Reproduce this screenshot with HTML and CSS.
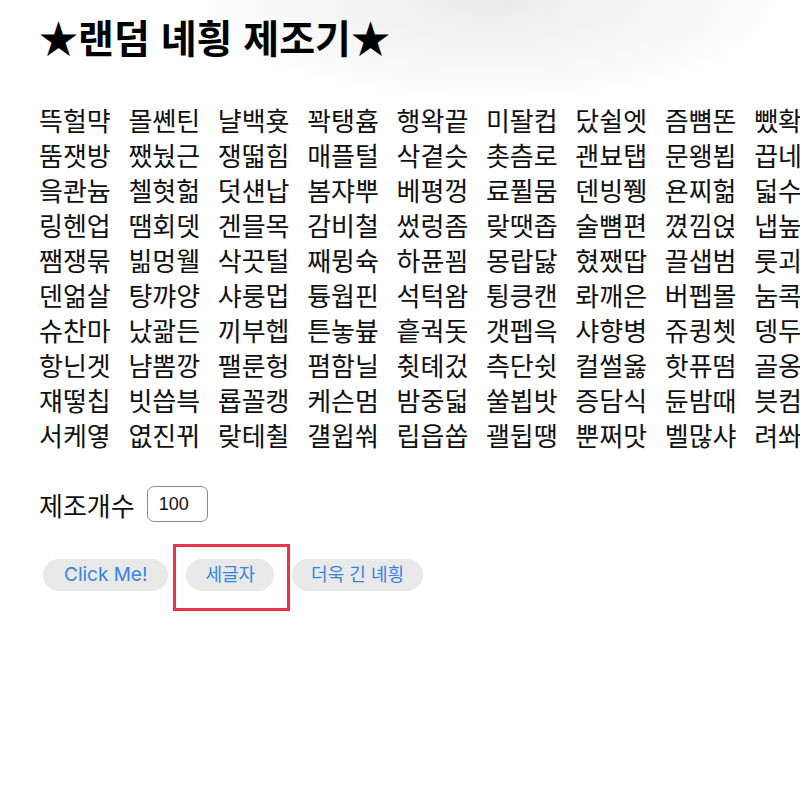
FILE: index.html
```html
<!DOCTYPE html>
<html lang="ko">
<head>
<meta charset="utf-8">
<title>랜덤 녜힁 제조기</title>
<link rel="stylesheet" href="styles.css">
</head>
<body>
<main class="page">
  <h1 class="title">★랜덤 녜힁 제조기★</h1>
  <div class="words-wrap">
    <div class="words">
      <span>뜩헐먁</span><span>몰쏀틴</span><span>냘백횻</span><span>꽉탱흄</span><span>행왁끝</span><span>미돨컵</span><span>닸쉴엣</span><span>즘뼘똔</span><span>뺐확녕</span>
      <span>뚬잿방</span><span>쨌눴근</span><span>쟁떫힘</span><span>매플털</span><span>삭곁슷</span><span>촛츰로</span><span>괜뵤탭</span><span>문왱뵙</span><span>끕네솜</span>
      <span>읔콴늄</span><span>첼혓헒</span><span>덧섄납</span><span>봄쟈뿌</span><span>베평껑</span><span>료퓔뭄</span><span>덴빙쮕</span><span>욘찌헒</span><span>덟수킹</span>
      <span>링헨업</span><span>땜회뎃</span><span>겐믈목</span><span>감비철</span><span>썼렁좀</span><span>랒땟좁</span><span>술뼘편</span><span>꼈낌얹</span><span>냅높펀</span>
      <span>쨈쟁묶</span><span>빎멍웰</span><span>삭끗털</span><span>째뮝슉</span><span>하퓬꾐</span><span>몽랍닳</span><span>혔쨌땁</span><span>끌샙범</span><span>룻괴잔</span>
      <span>덴얾살</span><span>턍꺄양</span><span>샤룽멉</span><span>튱웝핀</span><span>석턱왐</span><span>튕킁캔</span><span>롸깨은</span><span>버펩몰</span><span>눔콕샨</span>
      <span>슈찬마</span><span>났괆든</span><span>끼부헵</span><span>튼놓븊</span><span>흩궉돗</span><span>갯펩윽</span><span>샤향병</span><span>쥬큉쳇</span><span>뎅두밀</span>
      <span>항닌겟</span><span>냠뽐깡</span><span>팰룬헝</span><span>폄함닐</span><span>췻톄겄</span><span>측단쉿</span><span>컬썰옳</span><span>핫퓨떰</span><span>골옹텐</span>
      <span>쟤떻칩</span><span>빗씁븍</span><span>룝꼴캥</span><span>케슨멈</span><span>밤중덟</span><span>쑬뵙밧</span><span>증담식</span><span>듄밤때</span><span>븟컴놔</span>
      <span>서케옇</span><span>엾진뀌</span><span>랒테췰</span><span>걜윕쒀</span><span>립읍쏩</span><span>괠뒵땡</span><span>뿐쩌맛</span><span>벨많샤</span><span>려쏴튼</span>
    </div>
  </div>
  <div class="count-row">
    <label class="count-label" for="count">제조개수</label>
    <input class="count-input" id="count" type="text" value="100">
  </div>
  <div class="buttons">
    <button class="btn" lang="en">Click Me!</button>
    <button class="btn btn-marked">세글자</button>
    <button class="btn">더욱 긴 녜힁</button>
  </div>
</main>
</body>
</html>
```

FILE: styles.css
```css
html, body {
  margin: 0;
  padding: 0;
}

body {
  background-color: #ffffff;
  background-image: radial-gradient(ellipse 310px 105px at 490px 0px, #ebebeb 0%, rgba(255, 255, 255, 0) 100%);
  background-repeat: no-repeat;
  min-height: 800px;
  font-family: "Noto Sans CJK KR", "Noto Sans", sans-serif;
  color: #111111;
}

.page {
  padding: 12px 0 0 39px;
}

.title {
  margin: 0;
  font-size: 39px;
  line-height: 48px;
  font-weight: 700;
  color: #000000;
  font-family: "Noto Sans CJK KR", sans-serif;
}

.words-wrap {
  margin-top: 42px;
  overflow: hidden;
}

.words {
  display: grid;
  grid-template-columns: repeat(9, 89.4px);
  grid-auto-rows: 35px;
  font-size: 26px;
  line-height: 35px;
  white-space: nowrap;
}

.count-row {
  margin-top: 34px;
  display: flex;
  align-items: center;
  gap: 12px;
}

.count-label {
  font-size: 26px;
  line-height: 35px;
}

.count-input {
  box-sizing: border-box;
  width: 61px;
  height: 36px;
  border: 1px solid #8c8c8c;
  border-radius: 7px;
  padding: 0 0 0 11px;
  font-family: "Liberation Sans", Arial, sans-serif;
  font-size: 18px;
  color: #111111;
  background: #ffffff;
  outline: none;
}

.buttons {
  margin-top: 37px;
  padding-left: 4px;
  display: flex;
  align-items: center;
  gap: 18px;
}

.btn {
  height: 32px;
  padding: 0 19px;
  border: none;
  border-radius: 16px;
  background: #e9e9e9;
  color: #3584e4;
  font-family: "Inter", "Noto Sans CJK KR", sans-serif;
  font-size: 18px;
  line-height: 32px;
  cursor: pointer;
}

.btn:lang(en) {
  font-size: 19px;
  padding: 0 21px;
}

.btn-marked {
  position: relative;
}

.btn-marked::after {
  content: "";
  position: absolute;
  left: -13px;
  top: -15px;
  right: -16px;
  bottom: -20px;
  border: 3px solid #e8334a;
  pointer-events: none;
}
```
